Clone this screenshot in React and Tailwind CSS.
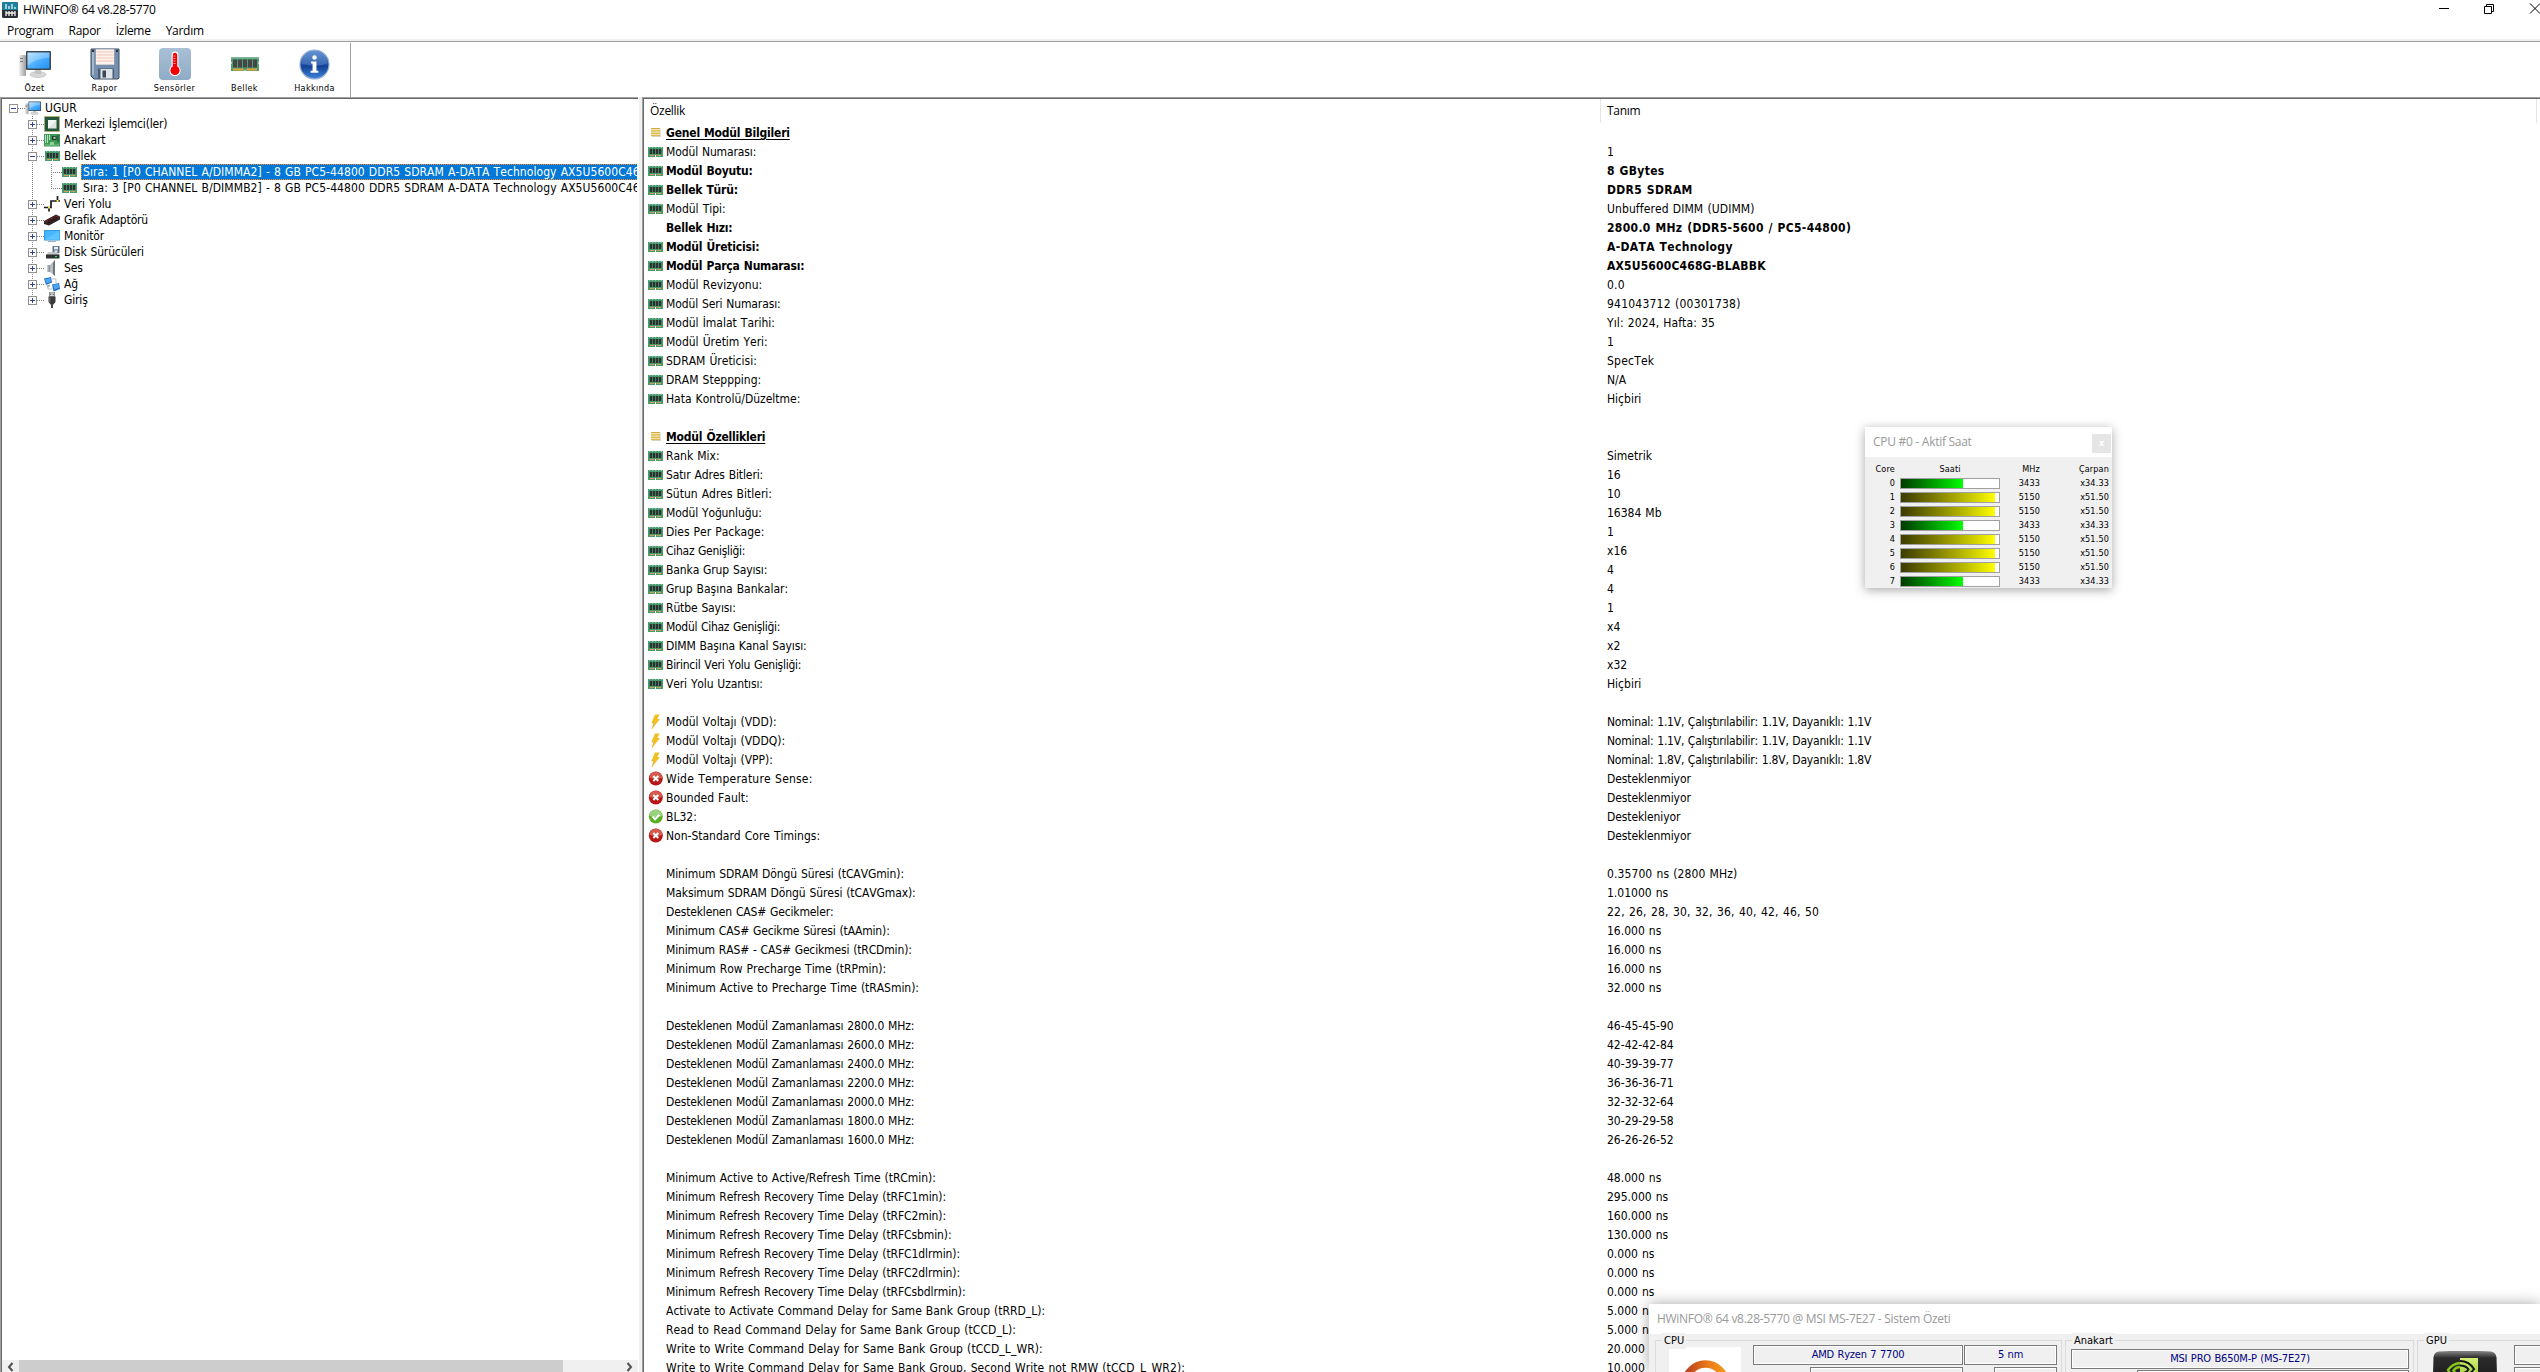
import React from "react";

const TAHOMA =
  "font-['DejaVu_Sans_Condensed','DejaVu_Sans',sans-serif] [font-stretch:condensed] [font-kerning:none] [word-spacing:0.6px]";
const SEGOE =
  "font-['Open_Sans','Noto_Sans',sans-serif] [font-stretch:normal] [word-spacing:0px] tracking-[-0.28px]";

/* ---------- icons ---------- */

function RamIcon({ className }) {
  return (
    <svg viewBox="0 0 15 10" className={className} preserveAspectRatio="none" shapeRendering="crispEdges">
      <rect width="15" height="10" fill="#4a9a70" />
      <path d="M1 0h1v1H1zM4 0h1v1H4zM7 0h1v1H7zM10 0h1v1h-1zM13 0h1v1h-1z" fill="#86c4a2" />
      <rect x="1" y="2" width="13" height="5" fill="#3b8460" />
      <rect x="2" y="2" width="2" height="5" fill="#303030" />
      <rect x="5" y="2" width="2" height="5" fill="#303030" />
      <rect x="8" y="2" width="2" height="5" fill="#303030" />
      <rect x="11" y="2" width="2" height="5" fill="#303030" />
      <rect x="2" y="8" width="4" height="1" fill="#d9a04a" />
      <rect x="9" y="8" width="4" height="1" fill="#d9a04a" />
      <rect x="7" y="8" width="1" height="2" fill="#ffffff" />
    </svg>
  );
}

function BigRamIcon() {
  return (
    <svg viewBox="0 0 28 15" className="h-[15px] w-7">
      <path d="M0 0h28v5l-1 1 1 1v7H15l-1-1-1 1H0V7l1-1-1-1z" fill="#4f9d72" />
      <path d="M0 0h28v1.5H0z" fill="#7fb99a" />
      {[2, 7, 12, 17, 22].map((x) => (
        <rect key={x} x={x} y="2.5" width="4" height="8" fill="#454545" />
      ))}
      <rect x="2" y="11.5" width="10.5" height="2" fill="#e2a33c" />
      <rect x="15.5" y="11.5" width="10.5" height="2" fill="#e2a33c" />
    </svg>
  );
}

function PcIcon({ className }) {
  return (
    <svg viewBox="0 0 32 28" className={className}>
      <defs>
        <linearGradient id="scr" x1="0" y1="0" x2="1" y2="1">
          <stop offset="0" stopColor="#a8dcff" />
          <stop offset="0.5" stopColor="#4fb0ff" />
          <stop offset="1" stopColor="#2290f2" />
        </linearGradient>
        <linearGradient id="twr" x1="0" x2="1">
          <stop offset="0" stopColor="#f0f0f0" />
          <stop offset="1" stopColor="#9c9c9c" />
        </linearGradient>
      </defs>
      <rect x="0" y="5" width="7" height="21" rx="1" fill="url(#twr)" />
      <rect x="1" y="8" width="3" height="1" fill="#777" />
      <rect x="1" y="11" width="3" height="1" fill="#777" />
      <ellipse cx="19" cy="24.5" rx="8" ry="3" fill="#d7d7d7" stroke="#b5b5b5" strokeWidth=".6" />
      <rect x="16" y="19" width="6" height="5" fill="#c4c4c4" />
      <rect x="7" y="1" width="25" height="19" rx="1" fill="#3e4650" />
      <rect x="8.5" y="2.5" width="22" height="16" fill="url(#scr)" />
      <path d="M8.5 2.5h22v5q-14 1-22 8z" fill="#fff" opacity=".25" />
    </svg>
  );
}

function FloppyIcon() {
  return (
    <svg viewBox="0 0 30 32" className="h-8 w-[30px]">
      <path d="M1 1h28v29l-1 1H4l-3-3z" fill="#7590af" stroke="#3c4c63" strokeWidth="1" />
      <path d="M2 2h2v25H2z" fill="#a3b7cd" />
      <rect x="5.5" y="1" width="19" height="16" fill="#fdf3ee" stroke="#7e8ea3" strokeWidth=".7" />
      <path d="M6.500 4h17M6.500 7h17M6.500 10h17M6.500 13h17" stroke="#f0c3b2" strokeWidth="1" />
      <rect x="8" y="20.500" width="16" height="10" fill="#4a5a70" />
      <rect x="10.500" y="21" width="12" height="9.500" fill="#dfe3e8" />
      <rect x="12.500" y="22.500" width="3.500" height="7" fill="#3a4458" />
      <rect x="2" y="2" width="2" height="2" fill="#333" />
      <rect x="26" y="2" width="2" height="2" fill="#333" />
    </svg>
  );
}

function ThermoIcon() {
  return (
    <svg viewBox="0 0 32 32" className="size-8">
      <defs>
        <linearGradient id="th" x1="0" y1="0" x2="0" y2="1">
          <stop offset="0" stopColor="#a9c0d6" />
          <stop offset="1" stopColor="#8fabc6" />
        </linearGradient>
      </defs>
      <rect width="32" height="32" rx="4" fill="url(#th)" />
      <circle cx="16" cy="22.500" r="5.600" fill="#fff" />
      <rect x="12.600" y="3.500" width="6.800" height="19" rx="3.400" fill="#fff" />
      <circle cx="16" cy="22.500" r="4.600" fill="#f20000" />
      <rect x="13.800" y="4.800" width="4.400" height="18" rx="2.200" fill="#f20000" />
      <path d="M14.500 8h2M14.500 10.500h2M14.500 13h2M14.500 15.500h2" stroke="#fff" strokeWidth=".6" />
    </svg>
  );
}

function InfoIcon() {
  return (
    <svg viewBox="0 0 32 32" className="size-[31px]">
      <defs>
        <linearGradient id="inf" x1="0" y1="0" x2="0" y2="1">
          <stop offset="0" stopColor="#4b86cf" />
          <stop offset="0.5" stopColor="#1c4fa6" />
          <stop offset="0.55" stopColor="#123f92" />
          <stop offset="1" stopColor="#3f86dc" />
        </linearGradient>
      </defs>
      <circle cx="16" cy="16" r="15" fill="url(#inf)" stroke="#9fb3d4" strokeWidth="1.200" />
      <path d="M2.500 15a13.500 13.500 0 0 1 27 0q-13 5-27 0z" fill="#fff" opacity=".14" />
      <circle cx="16" cy="8.700" r="2.300" fill="#fff" />
      <path d="M12.500 13h5.500v9.500h2v2h-8v-2h2V15h-1.500z" fill="#fff" />
    </svg>
  );
}

function AppIcon() {
  return (
    <svg viewBox="0 0 16 16" className="size-4">
      <rect width="16" height="16" rx="1.500" fill="#2b2f36" />
      <path d="M1.500 0h13A1.500 1.500 0 0 1 16 1.500V8H0V1.500A1.500 1.500 0 0 1 1.500 0z" fill="#1e7f9c" />
      <path d="M4 2v5M7 4v3M10 2v5M13 5v2" stroke="#d8f1f8" strokeWidth="1.400" />
      <path d="M4 9v5M7 9v5M10 9v5M13 9v5M3.500 11h10" stroke="#f2f2f2" strokeWidth="1.300" />
    </svg>
  );
}

function CpuIcon() {
  return (
    <svg viewBox="0 0 16 16" className="size-4">
      <rect x=".5" y=".5" width="15" height="15" fill="#1f5a3c" stroke="#c9b458" strokeDasharray="1 1" />
      <rect x="1" y="1" width="14" height="14" fill="#24583d" />
      <rect x="4" y="4" width="8.500" height="8.500" fill="#dfe3df" />
      <path d="M4 4h8.500L4 12.500z" fill="#f4f5f4" />
    </svg>
  );
}

function BoardIcon() {
  return (
    <svg viewBox="0 0 16 13" className="h-[13px] w-4">
      <rect width="16" height="12.500" fill="#3f9a55" />
      <path d="M1.500 1v8M3.500 1v8M5.500 1v5" stroke="#cfe8d2" strokeWidth=".9" />
      <rect x="8" y="2" width="4.500" height="4" fill="#1d3a28" />
      <rect x="9.500" y="2.800" width="2" height="2" fill="#cfd6d0" />
      <path d="M13.500 1v7M14.800 1v7" stroke="#1f5c34" strokeWidth=".8" />
      <rect x="6" y="8" width="4" height="3" fill="#8fd09b" />
      <path d="M1 11h14" stroke="#93c79d" strokeWidth=".8" />
    </svg>
  );
}

function BusIcon() {
  return (
    <svg viewBox="0 0 16 16" className="size-4">
      <path d="M0 11.500h7V5h9M5 11v4.500M13.500 0v6" stroke="#1a1a1a" strokeWidth="1.700" fill="none" />
      <rect x="4" y="10.500" width="2" height="2" fill="#f5e75a" />
      <rect x="12.500" y="4" width="2" height="2" fill="#f5e75a" />
    </svg>
  );
}

function GpuIcon() {
  return (
    <svg viewBox="0 0 16 12" className="h-3 w-4">
      <path d="M0 7L12 .5l4 2v3L5 11.500 0 10z" fill="#2c2526" />
      <path d="M1 8L12 2l3 1.500" stroke="#8b2a2a" strokeWidth=".9" fill="none" />
      <circle cx="6" cy="7" r="1.600" fill="#5b1c1e" stroke="#111" strokeWidth=".5" />
      <circle cx="11" cy="4.500" r="1.600" fill="#5b1c1e" stroke="#111" strokeWidth=".5" />
    </svg>
  );
}

function MonitorIcon() {
  return (
    <svg viewBox="0 0 16 12" className="h-3 w-4">
      <rect width="16" height="10.500" fill="#2f8fd6" />
      <rect x=".7" y=".7" width="14.600" height="9" fill="#45b6ff" />
      <path d="M.7 9.700L15.300.7v9z" fill="#5cc4ff" />
      <path d="M4 11.500h8" stroke="#9aa5ad" strokeWidth=".9" />
    </svg>
  );
}

function DiskIcon() {
  return (
    <svg viewBox="0 0 14 13" className="ml-px h-[13px] w-3.5">
      <rect x="6.500" y="0" width="7" height="7" fill="#5a6e85" />
      <rect x="8" y=".8" width="4" height="2.600" fill="#e9edf2" />
      <rect x="8.500" y="4.300" width="3" height="2.500" fill="#dfe5eb" />
      <path d="M2 6h5l6 1.500v1.500H.5z" fill="#c9c9c9" />
      <rect x="0" y="8.500" width="13.500" height="4" fill="#2e3133" />
      <rect x="9" y="10" width="2" height="1.200" fill="#38d64b" />
    </svg>
  );
}

function SpeakerIcon() {
  return (
    <svg viewBox="0 0 16 16" className="size-4">
      <path d="M3 5h3v7H3z" fill="#8b9298" />
      <path d="M6 5l5-5v16l-5-4z" fill="#b6bcc1" />
      <path d="M9 2.500L11 0v16l-2-2z" fill="#6f767c" />
      <path d="M3.800 5v7" stroke="#dfe3e6" />
    </svg>
  );
}

function NetIcon() {
  return (
    <svg viewBox="0 0 16 15" className="h-[15px] w-4">
      <path d="M0 1.500L7 0l1 5.500L2 8z" fill="#1f6cc8" />
      <path d="M1 2.200L6.300 1l.8 3.800L2.500 6.500z" fill="#4fa6f0" />
      <path d="M8 7.500l7-1.500 1 6-6.500 2.500z" fill="#1f6cc8" />
      <path d="M9 8l5.300-1.200.8 4-4.700 1.800z" fill="#4fa6f0" />
      <path d="M8 2h4v4M4 8v4h4" stroke="#b7c1c9" fill="none" />
      <path d="M3 9.500l3-1" stroke="#9aa3aa" strokeWidth="1.500" />
    </svg>
  );
}

function UsbIcon() {
  return (
    <svg viewBox="0 0 16 16" className="size-4">
      <rect x="5.500" y="0" width="5" height="4.500" fill="#d9d9d9" stroke="#777" strokeWidth=".8" />
      <path d="M6.800 1.500v1.500M9.200 1.500v1.500" stroke="#444" strokeWidth=".9" />
      <path d="M4.500 4.500h7V10l-2 2.500h-3L4.500 10z" fill="#3b3b3b" />
      <path d="M5.800 5.500v5" stroke="#777" />
      <path d="M8 12v4" stroke="#4a4a4a" strokeWidth="2" />
    </svg>
  );
}

function ListIcon() {
  return (
    <svg viewBox="0 0 15 14" className="h-3.5 w-[15px]">
      <rect x="4" y="3" width="9" height="8" fill="#cfcfcf" opacity=".7" />
      <rect x="3" y="2" width="9" height="8" fill="#f3e6b4" />
      <path d="M3 2.500h9M3 4.900h9M3 7.300h9M3 9.700h9" stroke="#d4ac35" strokeWidth="1" />
    </svg>
  );
}

function BoltIcon() {
  return (
    <svg viewBox="0 0 15 16" className="h-4 w-[15px]">
      <path d="M7 .5h4.500L9.300 5H12L4 15l2-6.200H3.500z" fill="#f0c020" />
      <path d="M4 15l2-6.200H3.500" stroke="#d89a18" strokeWidth=".6" fill="none" />
    </svg>
  );
}

function BadIcon() {
  return (
    <svg viewBox="0 0 15 15" className="size-[15px]">
      <circle cx="7.800" cy="7.500" r="7" fill="#b81717" />
      <path d="M1.500 7a6.300 6.300 0 0 1 12.600 0q-6 2-12.600 0z" fill="#e27867" opacity=".7" />
      <path d="M5.300 5l5 5M10.300 5l-5 5" stroke="#fff" strokeWidth="2" />
    </svg>
  );
}

function OkIcon() {
  return (
    <svg viewBox="0 0 15 15" className="size-[15px]">
      <circle cx="7.800" cy="7.500" r="6.900" fill="#55b024" />
      <path d="M1.500 7a6.300 6.300 0 0 1 12.600 0q-6 2-12.600 0z" fill="#b3dea0" opacity=".75" />
      <path d="M4.500 7.500l2.600 2.700 4.300-4.500" stroke="#fff" strokeWidth="2" fill="none" />
    </svg>
  );
}

/* ---------- tree ---------- */

const DOT_V = "bg-[repeating-linear-gradient(180deg,#808080_0_1px,transparent_1px_2px)]";
const DOT_H = "bg-[repeating-linear-gradient(90deg,#808080_0_1px,transparent_1px_2px)]";

function Expander({ open }) {
  return (
    <svg viewBox="0 0 9 9" className="size-[9px] shrink-0" shapeRendering="crispEdges">
      <rect x=".5" y=".5" width="8" height="8" fill="#fff" stroke="#919191" />
      <rect x="2" y="4" width="5" height="1" fill="#2b4b99" />
      {!open && <rect x="4" y="2" width="1" height="5" fill="#2b4b99" />}
    </svg>
  );
}

function TreeNode({ icon, label, open, last, children }) {
  return (
    <div className="relative">
      <div className={`absolute top-0 left-1 w-px ${DOT_V} ${last ? "h-2" : "h-full"}`} />
      <div className="relative flex h-4 items-center">
        <Expander open={open} />
        <div className={`h-px w-[7px] shrink-0 ${DOT_H}`} />
        <div className="flex w-4 shrink-0 justify-center">{icon}</div>
        <span className="ml-1 text-[12px] leading-4 tracking-[-0.15px]">{label}</span>
      </div>
      {children}
    </div>
  );
}

function Dimm({ label, selected, last }) {
  return (
    <div className="relative flex h-4 items-center pl-[23px]">
      <div className={`absolute top-0 left-[23px] w-px ${DOT_V} ${last ? "h-2" : "h-full"}`} />
      <div className={`h-px w-[11px] shrink-0 ${DOT_H}`} />
      <RamIcon className="h-2.5 w-[15px] shrink-0" />
      <span
        className={
          selected
            ? "ml-1 h-4 shrink-0 border border-dotted border-[#ff8728] bg-[#0078d7] px-px text-[12px] leading-[14px] tracking-[0.07px] text-white"
            : "ml-1 h-4 shrink-0 border border-transparent px-px text-[12px] leading-[14px] tracking-[0.07px]"
        }
      >
        {label}
      </span>
    </div>
  );
}

function Tree() {
  return (
    <div className="mr-px flex-1 overflow-hidden pt-px pl-[7px]">
      <div className="flex h-4 items-center">
        <Expander open />
        <div className={`h-px w-[7px] shrink-0 ${DOT_H}`} />
        <PcIcon className="h-[14px] w-4" />
        <span className="ml-1 text-[12px] leading-4">UGUR</span>
      </div>
      <div className="pl-[19px] whitespace-nowrap">
        <TreeNode icon={<CpuIcon />} label="Merkezi İşlemci(ler)" />
        <TreeNode icon={<BoardIcon />} label="Anakart" />
        <TreeNode icon={<RamIcon className="h-2.5 w-[15px]" />} label="Bellek" open>
          <Dimm selected label="Sıra: 1 [P0 CHANNEL A/DIMMA2] - 8 GB PC5-44800 DDR5 SDRAM A-DATA Technology AX5U5600C468G-BLABBK" />
          <Dimm last label="Sıra: 3 [P0 CHANNEL B/DIMMB2] - 8 GB PC5-44800 DDR5 SDRAM A-DATA Technology AX5U5600C468G-BLABBK" />
        </TreeNode>
        <TreeNode icon={<BusIcon />} label="Veri Yolu" />
        <TreeNode icon={<GpuIcon />} label="Grafik Adaptörü" />
        <TreeNode icon={<MonitorIcon />} label="Monitör" />
        <TreeNode icon={<DiskIcon />} label="Disk Sürücüleri" />
        <TreeNode icon={<SpeakerIcon />} label="Ses" />
        <TreeNode icon={<NetIcon />} label="Ağ" />
        <TreeNode icon={<UsbIcon />} label="Giriş" last />
      </div>
    </div>
  );
}

/* ---------- property list ---------- */

const ICONS = {
  h: <ListIcon />,
  r: <RamIcon className="h-2.5 w-[15px]" />,
  v: <BoltIcon />,
  x: <BadIcon />,
  o: <OkIcon />,
};

const ROWS = [
  ["h", "Genel Modül Bilgileri", ""],
  ["r", "Modül Numarası:", "1"],
  ["r", "Modül Boyutu:", "8 GBytes", true],
  ["r", "Bellek Türü:", "DDR5 SDRAM", true],
  ["r", "Modül Tipi:", "Unbuffered DIMM (UDIMM)"],
  ["", "Bellek Hızı:", "2800.0 MHz (DDR5-5600 / PC5-44800)", true],
  ["r", "Modül Üreticisi:", "A-DATA Technology", true],
  ["r", "Modül Parça Numarası:", "AX5U5600C468G-BLABBK", true],
  ["r", "Modül Revizyonu:", "0.0"],
  ["r", "Modül Seri Numarası:", "941043712 (00301738)"],
  ["r", "Modül İmalat Tarihi:", "Yıl: 2024, Hafta: 35"],
  ["r", "Modül Üretim Yeri:", "1"],
  ["r", "SDRAM Üreticisi:", "SpecTek"],
  ["r", "DRAM Steppping:", "N/A"],
  ["r", "Hata Kontrolü/Düzeltme:", "Hiçbiri"],
  ["", "", ""],
  ["h", "Modül Özellikleri", ""],
  ["r", "Rank Mix:", "Simetrik"],
  ["r", "Satır Adres Bitleri:", "16"],
  ["r", "Sütun Adres Bitleri:", "10"],
  ["r", "Modül Yoğunluğu:", "16384 Mb"],
  ["r", "Dies Per Package:", "1"],
  ["r", "Cihaz Genişliği:", "x16"],
  ["r", "Banka Grup Sayısı:", "4"],
  ["r", "Grup Başına Bankalar:", "4"],
  ["r", "Rütbe Sayısı:", "1"],
  ["r", "Modül Cihaz Genişliği:", "x4"],
  ["r", "DIMM Başına Kanal Sayısı:", "x2"],
  ["r", "Birincil Veri Yolu Genişliği:", "x32"],
  ["r", "Veri Yolu Uzantısı:", "Hiçbiri"],
  ["", "", ""],
  ["v", "Modül Voltajı (VDD):", "Nominal: 1.1V, Çalıştırılabilir: 1.1V, Dayanıklı: 1.1V"],
  ["v", "Modül Voltajı (VDDQ):", "Nominal: 1.1V, Çalıştırılabilir: 1.1V, Dayanıklı: 1.1V"],
  ["v", "Modül Voltajı (VPP):", "Nominal: 1.8V, Çalıştırılabilir: 1.8V, Dayanıklı: 1.8V"],
  ["x", "Wide Temperature Sense:", "Desteklenmiyor"],
  ["x", "Bounded Fault:", "Desteklenmiyor"],
  ["o", "BL32:", "Destekleniyor"],
  ["x", "Non-Standard Core Timings:", "Desteklenmiyor"],
  ["", "", ""],
  ["", "Minimum SDRAM Döngü Süresi (tCAVGmin):", "0.35700 ns (2800 MHz)"],
  ["", "Maksimum SDRAM Döngü Süresi (tCAVGmax):", "1.01000 ns"],
  ["", "Desteklenen CAS# Gecikmeler:", "22, 26, 28, 30, 32, 36, 40, 42, 46, 50"],
  ["", "Minimum CAS# Gecikme Süresi (tAAmin):", "16.000 ns"],
  ["", "Minimum RAS# - CAS# Gecikmesi (tRCDmin):", "16.000 ns"],
  ["", "Minimum Row Precharge Time (tRPmin):", "16.000 ns"],
  ["", "Minimum Active to Precharge Time (tRASmin):", "32.000 ns"],
  ["", "", ""],
  ["", "Desteklenen Modül Zamanlaması 2800.0 MHz:", "46-45-45-90"],
  ["", "Desteklenen Modül Zamanlaması 2600.0 MHz:", "42-42-42-84"],
  ["", "Desteklenen Modül Zamanlaması 2400.0 MHz:", "40-39-39-77"],
  ["", "Desteklenen Modül Zamanlaması 2200.0 MHz:", "36-36-36-71"],
  ["", "Desteklenen Modül Zamanlaması 2000.0 MHz:", "32-32-32-64"],
  ["", "Desteklenen Modül Zamanlaması 1800.0 MHz:", "30-29-29-58"],
  ["", "Desteklenen Modül Zamanlaması 1600.0 MHz:", "26-26-26-52"],
  ["", "", ""],
  ["", "Minimum Active to Active/Refresh Time (tRCmin):", "48.000 ns"],
  ["", "Minimum Refresh Recovery Time Delay (tRFC1min):", "295.000 ns"],
  ["", "Minimum Refresh Recovery Time Delay (tRFC2min):", "160.000 ns"],
  ["", "Minimum Refresh Recovery Time Delay (tRFCsbmin):", "130.000 ns"],
  ["", "Minimum Refresh Recovery Time Delay (tRFC1dlrmin):", "0.000 ns"],
  ["", "Minimum Refresh Recovery Time Delay (tRFC2dlrmin):", "0.000 ns"],
  ["", "Minimum Refresh Recovery Time Delay (tRFCsbdlrmin):", "0.000 ns"],
  ["", "Activate to Activate Command Delay for Same Bank Group (tRRD_L):", "5.000 ns"],
  ["", "Read to Read Command Delay for Same Bank Group (tCCD_L):", "5.000 ns"],
  ["", "Write to Write Command Delay for Same Bank Group (tCCD_L_WR):", "20.000 ns"],
  ["", "Write to Write Command Delay for Same Bank Group, Second Write not RMW (tCCD_L_WR2):", "10.000 ns"],
];

const NAME_TRACKING = [
  [/Genişliği/, "tracking-[-0.28px]"],
  [/^Wide/, "tracking-[0.2px]"],
  [/^(Write|Read)/, "tracking-[0.08px]"],
  [/^Minimum (Active|Row)/, "tracking-[-0.04px]"],
  [/^(Minimum SDRAM|Minimum Refresh|Maksimum)/, "tracking-[-0.1px]"],
  [/^(Minimum|Desteklenen)/, "tracking-[-0.15px]"],
  [/^(Modül (Numarası|Seri|Yoğun)|Banka|Rütbe|DIMM|Veri|Satır)/, "tracking-[-0.12px]"],
];

const VALUE_TRACKING = [
  [/^Nominal/, "tracking-[-0.23px]"],
  [/^22,/, "tracking-[0.2px]"],
  [/^Destek/, "tracking-[-0.1px]"],
  [/^(9410|SpecTek|0\.0$)/, "tracking-[0.22px]"],
  [/^(Unbuffered|Yıl|0\.357)/, "tracking-[0.1px]"],
  [/^AX5U/, "tracking-[0.18px]"],
];

function tracking(table, text, fallback) {
  const hit = table.find(([re]) => re.test(text));
  return hit ? hit[1] : fallback;
}

function PropertyList() {
  return (
    <div className="flex min-w-0 flex-1 flex-col overflow-hidden border-l border-[#696969]">
      <div className={`flex h-6 shrink-0 items-center text-[12px] ${SEGOE}`}>
        <div className="w-[956px] pl-1.5">Özellik</div>
        <div className="flex h-6 w-[937px] items-center border-x border-[#e5e5e5] pl-1.5">Tanım</div>
      </div>
      {ROWS.map(([icon, name, value, bold], i) => {
        const strong = bold || icon === "h";
        return (
          <div
            key={i}
            className={`flex h-[19px] shrink-0 items-center text-[12px] leading-[17px] whitespace-nowrap ${
              strong ? "font-bold" : ""
            }`}
          >
            <div className="flex w-[963px] shrink-0 items-center pl-1">
              <div className="mr-[3px] flex w-[15px] shrink-0 justify-center">{ICONS[icon]}</div>
              <span
                className={`pt-0.5 ${strong ? "tracking-[-0.2px]" : tracking(NAME_TRACKING, name, "")} ${
                  icon === "h" ? "underline underline-offset-2" : ""
                }`}
              >
                {name}
              </span>
            </div>
            <span className={`pt-0.5 ${tracking(VALUE_TRACKING, value, bold ? "tracking-[0.34px]" : "")}`}>{value}</span>
          </div>
        );
      })}
    </div>
  );
}

/* ---------- floating windows ---------- */

const CORES = [
  ["3433", "x34.33"],
  ["5150", "x51.50"],
  ["5150", "x51.50"],
  ["3433", "x34.33"],
  ["5150", "x51.50"],
  ["5150", "x51.50"],
  ["5150", "x51.50"],
  ["3433", "x34.33"],
];

const CORE_GRID = "grid h-3.5 grid-cols-[30px_5px_100px_40px_69px] items-center";

function ClockWindow() {
  return (
    <div className="absolute top-[427px] left-[1865px] h-[161px] w-[247px] bg-[#f0f0f0] shadow-[0_2px_10px_rgba(0,0,0,0.35)]">
      <div className="flex h-[30px] items-center justify-between bg-white pr-px pl-2">
        <span className={`text-[12px] text-[#999] ${SEGOE}`}>CPU #0 - Aktif Saat</span>
        <div className="mt-[7px] flex h-[19px] w-[19px] items-center justify-center self-start bg-[#e5e5e5] text-[9px] font-bold text-white">
          x
        </div>
      </div>
      <div className="pt-[5px] text-[9px] leading-[14px] tracking-[0.15px]">
        <div className={CORE_GRID}>
          <span className="text-right">Core</span>
          <span />
          <span className="text-center">Saati</span>
          <span className="text-right">MHz</span>
          <span className="text-right">Çarpan</span>
        </div>
        {CORES.map(([mhz, mult], i) => (
          <div key={i} className={CORE_GRID}>
            <span className="text-right">{i}</span>
            <span />
            <div className="h-[11px] border border-[#a0a0a0] bg-white">
              <div
                className={
                  mhz === "3433"
                    ? "h-full w-[62px] bg-linear-to-r from-[#003c00] to-[#00ff00]"
                    : "h-full w-[94px] bg-linear-to-r from-[#3c3c00] to-[#ffff00]"
                }
              />
            </div>
            <span className="text-right">{mhz}</span>
            <span className="text-right">{mult}</span>
          </div>
        ))}
      </div>
    </div>
  );
}

function Field({ className, children }) {
  return (
    <div
      className={`flex h-5 shrink-0 items-center justify-center border border-[#7a7a7a] text-[11px] tracking-[-0.2px] text-[#000080] shadow-[inset_0_0_0_1px_#fff] ${className}`}
    >
      {children}
    </div>
  );
}

function Group({ title, className, children }) {
  return (
    <div className={`relative h-[60px] shrink-0 border border-[#dcdcdc] ${className}`}>
      <span className="absolute -top-2 left-1.5 bg-[#f0f0f0] px-0.5 text-[11px] leading-4">{title}</span>
      {children}
    </div>
  );
}

function AmdLogo() {
  return (
    <div className="mt-1.5 ml-[13px] h-[60px] w-[72px] bg-white">
      <svg viewBox="0 0 72 60" className="h-[60px] w-[72px]">
        <defs>
          <linearGradient id="ryz" x1="0" x2="1">
            <stop offset="0" stopColor="#b8401f" />
            <stop offset="0.6" stopColor="#ee7d1a" />
            <stop offset="1" stopColor="#f39a1c" />
          </linearGradient>
        </defs>
        <circle cx="36.500" cy="37" r="20" fill="none" stroke="url(#ryz)" strokeWidth="7.500" />
      </svg>
    </div>
  );
}

function NvidiaLogo() {
  return (
    <svg viewBox="0 0 66 60" className="mt-2.5 ml-[14px] h-[60px] w-[66px]">
      <defs>
        <linearGradient id="nvb" x1="0" y1="0" x2="0" y2="1">
          <stop offset="0" stopColor="#8a8a8a" />
          <stop offset="0.12" stopColor="#2b2b2b" />
          <stop offset="1" stopColor="#050505" />
        </linearGradient>
        <linearGradient id="nvg" x1="0" y1="0" x2="0" y2="1">
          <stop offset="0" stopColor="#d3ef78" />
          <stop offset="1" stopColor="#76b900" />
        </linearGradient>
      </defs>
      <path d="M7 .5Q33-1 59 .5q5 1 5.500 6L66 60H0L1.500 6.500Q2 1 7 .5z" fill="url(#nvb)" />
      <path d="M28 7h18v34H28z" fill="url(#nvg)" />
      <path d="M28 12q-8 1-12 7 4 7 12 8M28 16q-4 0-6.500 3.500Q24 24 28 24.500" fill="none" stroke="#86c71c" strokeWidth="2.500" />
      <path d="M28 10q9 0 14 8-5 7-14 8M28 14.500q6 0 8.500 4-3 4-8.500 4" fill="none" stroke="#141414" strokeWidth="2" />
    </svg>
  );
}

function SummaryWindow() {
  return (
    <div className="absolute top-[1304px] left-[1649px] flex h-[68px] w-[891px] flex-col overflow-hidden bg-[#f0f0f0]">
      <div className={`flex h-[30px] shrink-0 items-center bg-white pl-2 text-[12px] text-[#999] ${SEGOE}`}>
        HWiNFO® 64 v8.28-5770 @ MSI MS-7E27 - Sistem Özeti
      </div>
      <div className="flex gap-[3px] pt-1.5 pl-1.5">
        <Group title="CPU" className="flex w-[407px]">
          <AmdLogo />
          <div className="mt-1 ml-3 flex w-[304px] flex-col gap-0.5">
            <div className="flex gap-px">
              <Field className="w-[210px]">AMD Ryzen 7 7700</Field>
              <Field className="w-[93px]">5 nm</Field>
            </div>
            <div className="flex justify-end gap-[31px]">
              <Field className="w-[153px]" />
              <Field className="w-[63px]" />
            </div>
          </div>
        </Group>
        <Group title="Anakart" className="w-[349px]">
          <div className="mt-2 ml-[5px] flex w-[338px] flex-col items-end gap-px">
            <Field className="w-[338px]">MSI PRO B650M-P (MS-7E27)</Field>
            <Field className="w-[272px]" />
          </div>
        </Group>
        <Group title="GPU" className="flex w-[407px]">
          <NvidiaLogo />
          <div className="mt-1 ml-4 flex flex-col gap-0.5">
            <Field className="w-[210px]" />
            <Field className="w-[210px]" />
          </div>
        </Group>
      </div>
    </div>
  );
}

/* ---------- main window ---------- */

const TOOLS = [
  ["Özet", <PcIcon className="h-7 w-8" />],
  ["Rapor", <FloppyIcon />],
  ["Sensörler", <ThermoIcon />],
  ["Bellek", <BigRamIcon />],
  ["Hakkında", <InfoIcon />],
];

export default function App() {
  return (
    <div className={`relative flex h-[1372px] w-[2540px] flex-col overflow-hidden bg-white text-black ${TAHOMA}`}>
      <div className={`flex h-[19px] items-center text-[12px] ${SEGOE}`}>
        <div className="ml-0.5">
          <AppIcon />
        </div>
        <span className="ml-[5px]">HWiNFO® 64 v8.28-5770</span>
        <svg viewBox="0 0 101 11" className="-mt-0.5 ml-auto h-[11px] w-[101px]" fill="none" stroke="#000">
          <path d="M0 5.500h10M45.500 3.500h7v7h-7zM47.500 3.500v-2h7v7h-2M91 .5l10 10M101 .5l-10 10" />
        </svg>
      </div>
      <div className={`flex h-5 items-center gap-[15px] pt-1 pl-[7px] text-[12px] ${SEGOE}`}>
        <span>Program</span>
        <span>Rapor</span>
        <span>İzleme</span>
        <span>Yardım</span>
      </div>
      <div className="h-[3px] shrink-0 border-b border-[#a0a0a0] bg-[#f0f0f0]" />
      <div className="flex h-[55px] shrink-0">
        <div className="mt-px flex w-[351px] border-r border-[#a0a0a0]">
          {TOOLS.map(([label, icon]) => (
            <div key={label} className="-ml-px flex w-[71px] flex-col items-center">
              <div className="mt-1 flex h-[34px] items-center">{icon}</div>
              <span className="mt-px text-[9px] leading-3 tracking-[0.35px]">{label}</span>
            </div>
          ))}
        </div>
      </div>
      <div className="flex min-h-0 flex-1">
        <div className="flex w-[638px] shrink-0 flex-col overflow-hidden border-t border-l border-[#a0a0a0]">
          <div className="flex min-h-0 flex-1 flex-col border-t border-l border-[#696969]">
            <Tree />
            <div className="flex h-3 shrink-0 items-center bg-[#f0f0f0]">
              <svg viewBox="0 0 17 12" className="h-3 w-[17px]" fill="none" stroke="#505050" strokeWidth="2">
                <path d="M10.500 3L7 7l3.500 4" />
              </svg>
              <div className="h-3 w-[544px] bg-[#cdcdcd]" />
              <svg viewBox="0 0 17 12" className="ml-auto h-3 w-[17px]" fill="none" stroke="#505050" strokeWidth="2">
                <path d="M6.500 3L10 7l-3.500 4" />
              </svg>
            </div>
          </div>
        </div>
        <div className="w-1 shrink-0 border-l border-white bg-[#f0f0f0]" />
        <div className="flex min-w-0 flex-1 border-t border-l border-[#a0a0a0]">
          <div className="flex min-w-0 flex-1 border-t border-[#696969]">
            <PropertyList />
          </div>
        </div>
      </div>
      <ClockWindow />
      <div className="absolute top-[1304px] left-[1649px] h-[68px] w-[891px] shadow-[0_0_14px_rgba(0,0,0,0.35)]" />
      <SummaryWindow />
    </div>
  );
}
